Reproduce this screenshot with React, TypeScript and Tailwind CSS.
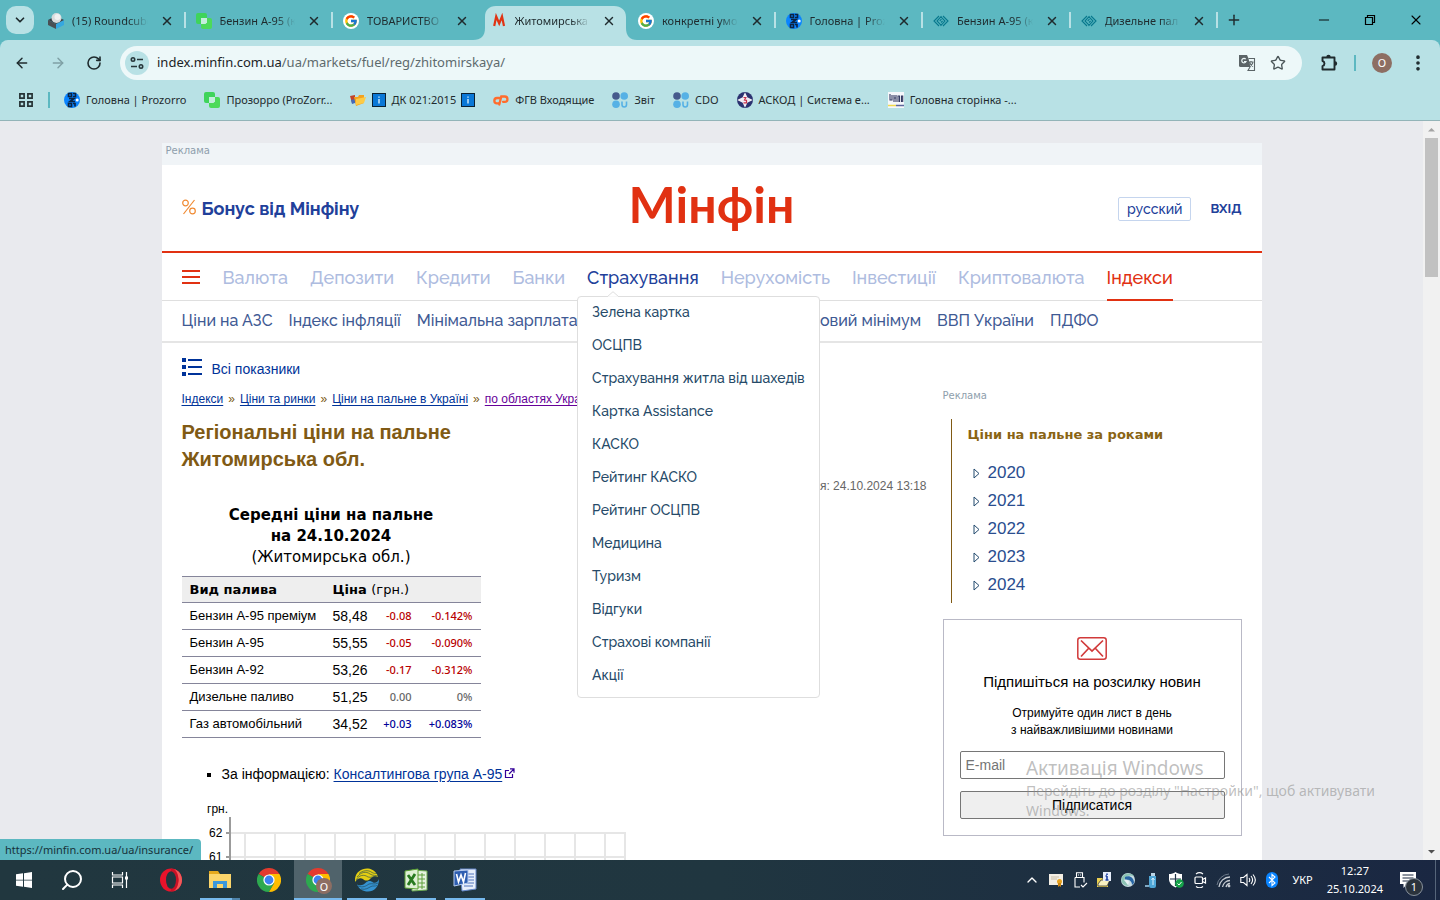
import React from "react";
import {
  ArrowLeft,
  ArrowRight,
  RotateCw,
  X,
  Plus,
  ChevronDown,
  ChevronUp,
  Minus,
  Star,
  EllipsisVertical,
  Search,
} from "lucide-react";
import { FcGoogle } from "react-icons/fc";

type IconProps = { className?: string };

/* ---------- Small site icons ---------- */

const RoundcubeIcon = () => (
  <svg viewBox="0 0 16 16" className="size-4 shrink-0">
    <path d="M0 7l8 4v5L0 12z" fill="#4a4f54" />
    <path d="M16 7l-8 4v5l8-4z" fill="#35a7e0" />
    <path d="M0 7l8-4 8 4-8 4z" fill="#37414a" />
    <circle cx="8.500" cy="5" r="5" fill="#d9dcdd" />
    <circle cx="9.500" cy="4" r="3" fill="#f0f1f1" />
  </svg>
);

const GreenSquares = () => (
  <svg viewBox="0 0 16 16" className="size-4 shrink-0">
    <rect width="11" height="11" rx="2" fill="#3fd45b" />
    <rect x="5" y="5" width="11" height="11" rx="2" fill="#4cda5a" />
    <rect x="4" y="4" width="7" height="7" rx="1" fill="#3fd45b" />
    <path d="M5 5h6v4.500L9.500 11H5z" fill="#c4eedd" />
  </svg>
);

const GoogleIcon = () => (
  <span className="flex size-4 shrink-0 items-center justify-center rounded-full bg-white">
    <FcGoogle className="size-3.5" />
  </span>
);

const MinfinIcon = () => (
  <svg viewBox="0 0 16 16" className="size-4 shrink-0">
    <path d="M3.200 13L5.200 3.500 8.200 10.500 11 3.500 13 13" fill="none" stroke="#e03414" strokeWidth="2.200" />
  </svg>
);

const BlueBadge = () => (
  <svg viewBox="0 0 16 16" className="size-4 shrink-0">
    <circle cx="8" cy="8" r="8" fill="#0a84ff" />
    <path d="M4.500 1.500h3v3h-3zM9 1.500h2.500v3H9M5 6.500h5L6 9.500h5M4.500 11.500h3v3h-3zM9 11.500h2v3" fill="none" stroke="#0b2442" strokeWidth="1.600" />
    <circle cx="13.200" cy="8" r="1.500" fill="#fff" />
  </svg>
);

const DiamondIcon = () => (
  <svg viewBox="0 0 16 16" className="size-4 shrink-0" fill="none" stroke="#08788d" strokeWidth="1.100">
    <path d="M6 3L1 8l5 5M8.500 3.200L4 8l4 4.200M10 13l5-5-5-5M7.500 12.800L12 8 8 3.800M6.700 8L8.500 6.200M8 9.500L9.600 8" />
  </svg>
);

const FolderPhotos = () => (
  <svg viewBox="0 0 16 16" className="size-4 shrink-0">
    <path d="M0 4l5-1v7l-3 1z" fill="#c1442c" />
    <path d="M1 8l4-1v4l-3 1z" fill="#4468b8" />
    <path d="M4 5h4l1-2h5v8l-8 3z" fill="#f4a21d" />
    <path d="M6 7l10-2-2 6-8 2z" fill="#fdcb45" />
  </svg>
);

const InfoSquare = () => (
  <svg viewBox="0 0 14 14" className="size-3.5 shrink-0">
    <rect x=".5" y=".5" width="13" height="13" fill="#0a78d7" stroke="#0b2233" />
    <path d="M7 6v4.500M7 3.500v1.200" stroke="#d8f0ff" strokeWidth="1.400" />
  </svg>
);

const CpanelIcon = () => (
  <svg viewBox="0 0 16 16" className="size-4 shrink-0" fill="none" stroke="#ff6c2c" strokeWidth="2.300" strokeLinecap="round">
    <path d="M6.500 6H4a2.600 2.600 0 000 5.300h1.500M6.300 12.500l2-8h3.500a2.600 2.600 0 010 5.300H10" />
  </svg>
);

const DotsU = () => (
  <svg viewBox="0 0 16 16" className="size-4 shrink-0">
    <circle cx="4" cy="4" r="3.800" fill="#465a8c" />
    <circle cx="12.200" cy="4" r="3.800" fill="#56b1e5" />
    <circle cx="4" cy="12.200" r="3.800" fill="#56b1e5" />
    <path d="M10 9.500v3.300a2.200 2.200 0 004.500 0V9.500" fill="none" stroke="#56b1e5" strokeWidth="1.600" />
  </svg>
);

const AskodIcon = () => (
  <svg viewBox="0 0 16 16" className="size-4 shrink-0">
    <circle cx="8" cy="8" r="8" fill="#2b3270" />
    <path d="M8 1.800l2 4.200 4.200 2-4.200 2-2 4.200L6 10 1.800 8 6 6z" fill="#f1eef5" stroke="#f1eef5" strokeWidth="1.400" />
    <path d="M6.500 5.500h2.300L7.500 8l2 .3v2.500h-3" fill="none" stroke="#c8324c" strokeWidth="1.200" />
  </svg>
);

const NadsIcon = () => (
  <svg viewBox="0 0 16 16" className="size-4 shrink-0">
    <rect width="16" height="16" fill="#f5f7fb" />
    <path d="M2 2v6h2V3M6 10V3M6 6h2M8 3v7M10 10V4h1.500v6M13.500 10V4h1.200v6" fill="none" stroke="#343a63" strokeWidth="1.100" />
    <path d="M0 13.500h8" stroke="#f1d94c" strokeWidth="1.500" />
    <path d="M8 13.500h8" stroke="#5e679b" strokeWidth="1.500" />
  </svg>
);

/* ---------- Browser ---------- */

const tabs = [
  { title: "(15) Roundcube", icon: <RoundcubeIcon /> },
  { title: "Бензин А-95 (к", icon: <GreenSquares /> },
  { title: "ТОВАРИСТВО", icon: <GoogleIcon /> },
  { title: "Житомирська", icon: <MinfinIcon />, active: true },
  { title: "конкретні умо", icon: <GoogleIcon /> },
  { title: "Головна | Proz", icon: <BlueBadge /> },
  { title: "Бензин А-95 (к", icon: <DiamondIcon /> },
  { title: "Дизельне пал", icon: <DiamondIcon /> },
];

const bookmarks = [
  { title: "Головна | Prozorro", icon: <BlueBadge /> },
  { title: "Прозорро (ProZorr...", icon: <GreenSquares /> },
  { title: "ДК 021:2015", icon: <FolderPhotos />, boxed: true },
  { title: "ФГВ Входящие", icon: <CpanelIcon /> },
  { title: "Звіт", icon: <DotsU /> },
  { title: "CDO", icon: <DotsU /> },
  { title: "АСКОД | Система е...", icon: <AskodIcon /> },
  { title: "Головна сторінка -...", icon: <NadsIcon /> },
];

function TabStrip() {
  return (
    <div className="flex h-10 items-center bg-[#5cb8c1]">
      <button aria-label="Пошук вкладок" className="ml-1.5 flex size-7 shrink-0 items-center justify-center rounded-[10px] bg-[#b8e1e5]">
        <ChevronDown className="size-3.5" strokeWidth={3} />
      </button>
      <div role="tablist" className="ml-1 flex h-full max-w-[1180px] min-w-0 flex-1">
        {tabs.map((tab, i) => (
          <div
            key={i}
            role="tab"
            aria-selected={!!tab.active}
            className="relative flex min-w-0 flex-1 items-end"
          >
            {tab.active && (
              <svg viewBox="0 0 164 34" preserveAspectRatio="none" className="absolute -inset-x-2 bottom-0 h-[34px] w-[164px]">
                <path d="M0 34c8 0 12-4 12-12V11C12 4 16 0 23 0h118c7 0 12 4 12 11v11c0 8 4 12 11 12z" fill="#b8e1e5" />
              </svg>
            )}
            <div className="relative flex h-10 w-full items-center gap-2 pt-0.5 pr-3 pl-2.5">
              {tab.icon}
              <span className="min-w-0 flex-1 overflow-hidden whitespace-nowrap [mask-image:linear-gradient(to_right,#000_75%,transparent)]">
                {tab.title}
              </span>
              <button aria-label="Закрити вкладку" className="ml-1 shrink-0">
                <X className="size-3.5" strokeWidth={2.5} />
              </button>
            </div>
            {i !== 2 && i !== 3 && <span className="absolute top-3 right-0 h-4 w-0.5 bg-[#b8e1e5]" />}
          </div>
        ))}
      </div>
      <button aria-label="Нова вкладка" className="ml-2 shrink-0">
        <Plus className="size-4" strokeWidth={2.2} />
      </button>
      <div className="ml-auto flex items-center gap-[30px] pr-4 text-black">
        <button aria-label="Згорнути"><Minus className="size-4" strokeWidth={1.4} /></button>
        <button aria-label="Розгорнути">
          <svg viewBox="0 0 16 16" className="size-4" fill="none" stroke="currentColor" strokeWidth="1.200">
            <path d="M3.500 5.500h7v7h-7zM5.500 5.500v-2h7v7h-2" />
          </svg>
        </button>
        <button aria-label="Закрити"><X className="size-4" strokeWidth={1.6} /></button>
      </div>
    </div>
  );
}

const TuneIcon = () => (
  <svg viewBox="0 0 16 16" className="size-4" fill="none" stroke="#27363a" strokeWidth="1.600">
    <circle cx="4" cy="4.500" r="1.700" />
    <path d="M8 4.500h6M2 11.500h6" />
    <circle cx="12" cy="11.500" r="1.700" />
  </svg>
);

const TranslateIcon = () => (
  <svg viewBox="0 0 18 18" className="size-[18px]">
    <path d="M1 1h8l1.500 3.500L12.500 13H2.500A1.500 1.500 0 011 11.500z" fill="#5b6467" />
    <path d="M7.700 5.200a2.200 2.200 0 10.300 2.300H6" fill="none" stroke="#edf8f9" strokeWidth="1.200" />
    <path d="M10.500 4.500h6v12H10l2-3.500M10.500 8h5M13 7v1.200M11.500 8.500c.8 2 2 3 3.500 4M15 8.500c-.8 2-2 3-3.200 4" fill="none" stroke="#5b6467" strokeWidth="1.100" />
  </svg>
);

const PuzzleIcon = () => (
  <svg viewBox="0 0 18 18" className="size-[18px]">
    <path d="M2.500 3.500h12v12h-12v-3.300a2.700 2.700 0 000-5.200z" fill="none" stroke="#1f2a2d" strokeWidth="1.900" strokeLinejoin="round" />
    <path d="M6.300 3a2.200 2.200 0 014.400 0zM15 7.300a2.200 2.200 0 010 4.400z" fill="#1f2a2d" />
  </svg>
);

function Toolbar() {
  return (
    <div className="bg-[#5cb8c1]">
      <div className="rounded-t-lg border-b border-[#93b4b8] bg-[#b8e1e5]">
        <div className="flex h-[46px] items-center pr-3 pl-3.5">
          <div className="flex items-center gap-5">
            <button aria-label="Назад"><ArrowLeft className="size-4" strokeWidth={2.2} /></button>
            <button aria-label="Вперед" className="text-[#7fa0a5]"><ArrowRight className="size-4" strokeWidth={2.2} /></button>
            <button aria-label="Оновити"><RotateCw className="size-4" strokeWidth={2.4} /></button>
          </div>
          <div className="ml-[18px] flex h-[34px] min-w-0 flex-1 items-center rounded-full bg-[#edf8f9] pr-4 pl-[5px]">
            <span className="flex size-6 items-center justify-center rounded-full bg-[#b8e1e5]"><TuneIcon /></span>
            <span className="ml-2 flex-1 truncate text-[13px] text-[#5d6a6d]">
              <span className="text-[#1b2326]">index.minfin.com.ua</span>/ua/markets/fuel/reg/zhitomirskaya/
            </span>
            <button aria-label="Перекласти"><TranslateIcon /></button>
            <button aria-label="Закладка" className="ml-3.5 text-[#4a5558]"><Star className="size-4" /></button>
          </div>
          <button aria-label="Розширення" className="ml-[18px]"><PuzzleIcon /></button>
          <span className="ml-4 h-4 w-0.5 bg-[#5cb8c1]" />
          <button aria-label="Профіль" className="ml-4 flex size-5 items-center justify-center rounded-full bg-[#8d6e63] text-[11px] text-white">
            О
          </button>
          <button aria-label="Меню" className="ml-4"><EllipsisVertical className="size-5" strokeWidth={2.4} /></button>
        </div>
        <div className="flex h-[34px] items-start pt-1.5 pl-[18px] whitespace-nowrap">
          <svg viewBox="0 0 16 16" className="size-4" fill="none" stroke="#263336" strokeWidth="1.700">
            <path d="M1.900 1.900h4.200v4.200H1.900zM9.900 1.900h4.200v4.200H9.900zM1.900 9.900h4.200v4.200H1.900zM9.900 9.900h4.200v4.200H9.900z" />
          </svg>
          <span className="mx-3.5 h-4 w-0.5 bg-[#5cb8c1]" />
          <div className="flex gap-[18px]">
            {bookmarks.map((b) => (
              <a key={b.title} href="#" className="flex items-center gap-1.5 leading-4">
                {b.icon}
                {b.boxed ? (
                  <span className="flex items-center gap-[5px]"><InfoSquare />{b.title}<InfoSquare /></span>
                ) : (
                  b.title
                )}
              </a>
            ))}
          </div>
        </div>
      </div>
    </div>
  );
}

/* ---------- Site ---------- */

const navItems = ["Валюта", "Депозити", "Кредити", "Банки", "Страхування", "Нерухомість", "Інвестиції", "Криптовалюта", "Індекси"];
const subItems = ["Ціни на АЗС", "Індекс інфляції", "Мінімальна зарплата", "Середня зарплата", "Прожитковий мінімум", "ВВП України", "ПДФО"];
const insurance = [
  "Зелена картка", "ОСЦПВ", "Страхування житла від шахедів", "Картка Assistance", "КАСКО", "Рейтинг КАСКО",
  "Рейтинг ОСЦПВ", "Медицина", "Туризм", "Відгуки", "Страхові компанії", "Акції",
];

function InsuranceMenu() {
  return (
    <ul className="absolute top-[43px] -left-2.5 z-20 rounded border border-[#dedede] bg-white pb-1 text-sm text-[#264a68]">
      <svg viewBox="0 0 12 6" className="absolute -top-[6px] left-[29px] h-1.5 w-3">
        <path d="M0 6L6 .7 12 6z" fill="#fff" stroke="#dedede" />
        <path d="M1 6h10" stroke="#fff" />
      </svg>
      {insurance.map((item) => (
        <li key={item}>
          <a href="#" className="block px-3.5 pb-0.5 leading-[31px] whitespace-nowrap">{item}</a>
        </li>
      ))}
    </ul>
  );
}

function SiteHeader() {
  return (
    <header className="font-['Raleway','Lato','Liberation_Sans',sans-serif] font-medium">
      <div className="grid h-[86px] grid-cols-3 items-center px-5">
        <a href="#" className="flex items-center gap-1.5 pt-0.5 text-lg font-bold text-[#21409a]">
          <svg viewBox="0 0 14 16" className="-mt-1 h-4 w-3.5" fill="none" stroke="#f08a32" strokeWidth="1.200">
            <circle cx="3.500" cy="4" r="2.800" />
            <circle cx="10.500" cy="12" r="2.800" />
            <path d="M12.500 1L1.500 15" />
          </svg>
          Бонус від Мінфіну
        </a>
        <a href="#" className="pb-2 text-center font-['Lato',sans-serif] text-[50px] leading-[60px] font-bold text-[#e13112]">Мінфін</a>
        <div className="flex items-center justify-end gap-[19px] pt-0.5 text-[#21409a]">
          <a href="#" className="rounded-xs border border-[#c5d5ee] px-2 text-sm leading-[22px]">русский</a>
          <a href="#" className="text-[13px] font-bold">ВХІД</a>
        </div>
      </div>
      <nav className="flex h-[50px] items-center border-t-2 border-b border-t-[#e13112] border-b-[#dfdfdf] px-5 text-lg">
        <button aria-label="Меню" className="mr-[23px] flex w-[18px] flex-col gap-1">
          <span className="h-0.5 bg-[#e13112]" />
          <span className="h-0.5 bg-[#e13112]" />
          <span className="h-0.5 bg-[#e13112]" />
        </button>
        <div className="flex h-12 gap-[22px] self-start leading-[50px] whitespace-nowrap">
          {navItems.map((item) => (
            <div key={item} className="relative">
              <a
                href="#"
                className={
                  item === "Індекси"
                    ? "block h-12 border-b-2 border-[#e13112] text-[#e13112]"
                    : item === "Страхування"
                      ? "block text-[#21409a]"
                      : "block text-[#aebcdf]"
                }
              >
                {item}
              </a>
              {item === "Страхування" && <InsuranceMenu />}
            </div>
          ))}
        </div>
      </nav>
      <nav className="flex h-[42px] items-center gap-4 border-b-2 border-[#e5e5e5] px-5 text-base whitespace-nowrap text-[#3f5a94]">
        {subItems.map((item) => <a key={item} href="#">{item}</a>)}
      </nav>
    </header>
  );
}

const rows = [
  { name: "Бензин А-95 преміум", price: "58,48", delta: "-0.08", pct: "-0.142%", tone: "text-[#b80000]" },
  { name: "Бензин А-95", price: "55,55", delta: "-0.05", pct: "-0.090%", tone: "text-[#b80000]" },
  { name: "Бензин А-92", price: "53,26", delta: "-0.17", pct: "-0.312%", tone: "text-[#b80000]" },
  { name: "Дизельне паливо", price: "51,25", delta: "0.00", pct: "0%", tone: "text-[#666666]" },
  { name: "Газ автомобільний", price: "34,52", delta: "+0.03", pct: "+0.083%", tone: "text-[#000099]" },
];

function PriceTable() {
  return (
    <table className="mt-[11px] w-[299px] table-fixed border-collapse">
      <caption className="pb-2 font-['DejaVu_Sans',sans-serif] text-[15px] leading-[21px]">
        <b>Середні ціни на пальне<br />на 24.10.2024</b><br />(Житомирська обл.)
      </caption>
      <colgroup>
        <col className="w-[143px]" />
        <col className="w-[43px]" />
        <col className="w-[52px]" />
        <col className="w-[61px]" />
      </colgroup>
      <thead>
        <tr className="h-[26px] border-y border-[#85859a] bg-[#eeeeee] text-left font-['DejaVu_Sans',sans-serif] text-[13px]">
          <th scope="col" className="pl-2">Вид палива</th>
          <th scope="col" colSpan={3} className="pl-2">Ціна <span className="font-normal">(грн.)</span></th>
        </tr>
      </thead>
      <tbody>
        {rows.map((r) => (
          <tr key={r.name} className="h-[27px] border-b border-[#85859a]">
            <td className="pl-2 text-[13px] whitespace-nowrap">{r.name}</td>
            <td className="pl-2 text-sm">{r.price}</td>
            <td className={"pr-2 text-right font-['Noto_Sans',sans-serif] text-[11px] font-medium " + r.tone}>{r.delta}</td>
            <td className={"pr-2 text-right font-['Noto_Sans',sans-serif] text-[11px] font-medium " + r.tone}>{r.pct}</td>
          </tr>
        ))}
      </tbody>
    </table>
  );
}

const gridX = [17, 47, 77, 107, 137, 167, 197, 227, 257, 287, 317, 347, 377];

function PriceChart() {
  return (
    <svg viewBox="0 0 450 100" className="mt-4 h-[100px] w-[450px] shrink-0 text-xs" fill="#000">
      <text x="25" y="13">грн.</text>
      <text x="27" y="37">62</text>
      <text x="27" y="61">61</text>
      <g transform="translate(46 0)" stroke="#e6e6e6" strokeWidth="2">
        {gridX.map((x) => <path key={x} d={`M${x} 33v67`} />)}
        <path d="M2 33h396M2 57h396M397 33v67" />
      </g>
      <path d="M48 17v83M44 33h4M44 57h4" stroke="#9b9b9b" strokeWidth="2" />
    </svg>
  );
}

function ListIcon({ className }: IconProps) {
  return (
    <svg viewBox="0 0 20 18" className={className} fill="#003399">
      <path d="M0 0h4v4H0zM0 7h4v4H0zM0 14h4v4H0zM6 1h14v2H6zM6 8h14v2H6zM6 15h14v2H6z" />
    </svg>
  );
}

function Main() {
  const link = "text-[#003399] underline underline-offset-2";
  return (
    <main className="min-w-0 flex-1 pl-5">
      <a href="#" className="mt-4 flex items-center gap-2.5 text-sm leading-5 text-[#003399]">
        <ListIcon className="-mt-1 h-[18px] w-5" />
        Всі показники
      </a>
      <div className="mt-3 flex gap-[5px] text-xs leading-4 text-[#7a5a12]">
        <a href="#" className={link}>Індекси</a>»
        <a href="#" className={link}>Ціни та ринки</a>»
        <a href="#" className={link}>Ціни на пальне в Україні</a>»
        <a href="#" className="text-[#660099] underline underline-offset-2">по областях України</a>
      </div>
      <h1 className="mt-3 text-xl leading-[27px] font-bold text-[#805a14]">
        Регіональні ціни на пальне<br />Житомирська обл.
      </h1>
      <p className="mt-[5px] pr-4 text-right text-xs leading-4 text-[#666666]">Останнє оновлення: 24.10.2024 13:18</p>
      <PriceTable />
      <ul className="mt-[26px] ml-10 list-[square] text-sm leading-5">
        <li>
          За інформацією: <a href="#" className={link}>Консалтингова група А-95</a>
          <svg viewBox="0 0 11 11" className="ml-0.5 inline size-[11px] align-baseline" fill="none" stroke="#330099" strokeWidth="1.200">
            <path d="M5 2.500H1.500v7h7V6M6 .8h4v4M10 .8L5 6" />
          </svg>
        </li>
      </ul>
      <PriceChart />
    </main>
  );
}

function Sidebar() {
  return (
    <aside className="mr-5 w-[299px] shrink-0 pt-[45px]">
      <p className="font-['DejaVu_Sans',sans-serif] text-[10px] leading-4 text-[#8e9eac]">Реклама</p>
      <section className="mt-[15px] ml-2 border-l border-[#805a14] pt-1.5 pb-1 pl-4">
        <h2 className="font-['DejaVu_Sans',sans-serif] text-[13px] leading-5 font-bold text-[#8a6414]">Ціни на пальне за роками</h2>
        <ul className="mt-3.5 text-[17px] leading-7 text-[#2a4d8f]">
          {["2020", "2021", "2022", "2023", "2024"].map((y) => (
            <li key={y}>
              <a href="#" className="flex items-center gap-2 pl-[5px]">
                <svg viewBox="0 0 7 11" className="h-[11px] w-[7px]" fill="none" stroke="#234a6e">
                  <path d="M1 1l5 4.500L1 10z" />
                </svg>
                {y}
              </a>
            </li>
          ))}
        </ul>
      </section>
      <form className="mt-4 flex flex-col items-center border border-[#b9b9c6] px-4 pt-[17px] pb-4 text-center" onSubmit={(e) => e.preventDefault()}>
        <svg viewBox="0 0 30 23" className="h-[23px] w-[30px]" fill="none" stroke="#d13a3a">
          <rect x=".8" y=".8" width="28.400" height="21.400" rx="2.500" strokeWidth="1.500" />
          <path d="M4 3.500l11 10.500 11-10.500M4 19.500l7.500-8M26 19.500l-7.500-8" strokeWidth="1.700" />
        </svg>
        <h2 className="mt-3 text-[15px] leading-5">Підпишіться на розсилку новин</h2>
        <p className="mt-[13px] text-xs leading-[17px]">Отримуйте один лист в день<br />з найважливішими новинами</p>
        <input type="email" aria-label="E-mail" placeholder="E-mail" className="mt-3 h-7 w-full rounded-xs border border-[#767676] px-[5px] text-sm placeholder:text-[#757575]" />
        <button className="mt-3 h-7 w-full rounded-xs border border-[#767676] bg-[#efefef] text-sm">Підписатися</button>
      </form>
    </aside>
  );
}

function Scrollbar() {
  return (
    <div className="flex w-[17px] shrink-0 flex-col items-center bg-[#f1f1f1]">
      <svg viewBox="0 0 17 17" className="size-[17px]"><path d="M5 10.500L8.500 7l3.500 3.500z" fill="#a3a3a3" /></svg>
      <div className="h-[139px] w-[13px] bg-[#c1c1c1]" />
      <svg viewBox="0 0 17 17" className="mt-auto size-[17px]"><path d="M5 7l3.500 3.500L12 7z" fill="#505050" /></svg>
    </div>
  );
}

/* ---------- Taskbar ---------- */

const OperaIcon = () => (
  <svg viewBox="0 0 24 24" className="size-6">
    <ellipse cx="12" cy="12" rx="11" ry="11.500" fill="#e8132b" />
    <path d="M15 1c5 1.500 8 6 8 11s-3 9.500-8 11c3-2 4.500-6.500 4.500-11S18 3 15 1z" fill="#f25a5a" />
    <path d="M12 .5c4 0 7 5 7.500 11.500C19 18.500 16 23.500 12 23.500z" fill="#c81226" />
    <ellipse cx="12" cy="12" rx="5" ry="8.700" fill="#21363f" />
  </svg>
);

const ExplorerIcon = () => (
  <svg viewBox="0 0 24 20" className="h-5 w-6">
    <path d="M1 1h9l2 3h11v14H1z" fill="#e5a91d" />
    <path d="M1 4h22v14H1z" fill="#fbd56b" />
    <path d="M5 18v-7h14v7h-4v-4H9v4z" fill="#3c98dc" />
  </svg>
);

const ChromeIcon = () => (
  <svg viewBox="0 0 24 24" className="size-6">
    <path d="M12 12L1.600 6A12 12 0 0122.400 6z" fill="#e33b2e" />
    <path d="M12 12L1.600 6A12 12 0 0012 24l5.200-9z" fill="#2da94f" />
    <path d="M12 12l5.200 3L12 24A12 12 0 0022.400 6H12z" fill="#fdbd00" />
    <circle cx="12" cy="12" r="5.600" fill="#fff" />
    <circle cx="12" cy="12" r="4.400" fill="#3c82f1" />
  </svg>
);

const WaveIcon = () => (
  <svg viewBox="0 0 24 24" className="size-6">
    <path d="M0 14C-1 5 6 0 13 .5c5 .5 9 4 10 8.500-4-2-6 0-8 2s-5 2-7 0c-3-2-6 0-8 3z" fill="#e4cf13" />
    <path d="M24 11c0 8-5 12.500-11 12.500-5 0-9-2.500-11-7 4 2 7 0 9-2s5-2 7 0c3 1 5-1 6-3.500z" fill="#3592d0" />
    <path d="M2 9c4-5 9-6 13-3 3 2 6 1 8 2M4 5.500c4-3 9-4 13-1 2 1 3 1 5 1M1 12c3-5 8-6 12-3 3 1 6-1 9 0M3 18c5 2 8 0 11-2 3-1 6 1 9-1M6 21c5 1 7-1 10-2.500 2-1 4 0 6-1" fill="none" stroke="#1d4352" strokeWidth=".6" />
  </svg>
);

const ExcelIcon = () => (
  <svg viewBox="0 0 24 24" className="size-6">
    <path d="M8 2l15 1v19l-15 1z" fill="#e6f2df" stroke="#6aa84f" />
    <path d="M14 7h7M14 11h7M14 15h7M14 19h7M18 5v16" stroke="#5e9f3b" />
    <path d="M1 3l13-2v20L1 20z" fill="#dff0d4" stroke="#5aa033" />
    <path d="M4 7l7 10M11 6L4 17" stroke="#287a20" strokeWidth="2.800" />
  </svg>
);

const WordIcon = () => (
  <svg viewBox="0 0 24 24" className="size-6">
    <path d="M7 1h16v20l-14 2z" fill="#e8effb" stroke="#6487c9" />
    <path d="M15 6h6M15 9h6M15 12h6M11 15h10M11 18h9" stroke="#5074bd" />
    <path d="M1 3l14-1v13L1 18z" fill="#2e5eb0" stroke="#b6ccf0" />
    <path d="M3.500 6l2 8L8 7l2.500 7 2-9" fill="none" stroke="#fff" strokeWidth="1.600" />
  </svg>
);

const apps = [
  { label: "Opera", icon: <OperaIcon />, line: "" },
  { label: "Провідник", icon: <ExplorerIcon />, line: "absolute inset-x-1 bottom-0 h-0.5 border-r-8 border-[#4f84ab] bg-[#76b9ed]" },
  { label: "Chrome", icon: <ChromeIcon />, line: "" },
  { label: "Chrome О", icon: <ChromeIcon />, line: "absolute inset-x-0 bottom-0 h-0.5 bg-[#76b9ed]", focused: true },
  { label: "Earth", icon: <WaveIcon />, line: "absolute inset-x-1 bottom-0 h-0.5 bg-[#76b9ed]" },
  { label: "Excel", icon: <ExcelIcon />, line: "absolute inset-x-1 bottom-0 h-0.5 bg-[#76b9ed]" },
  { label: "Word", icon: <WordIcon />, line: "absolute inset-x-1 bottom-0 h-0.5 bg-[#76b9ed]" },
];

const trayIcons = [
  <ChevronUp key="up" className="size-4" strokeWidth={2} />,
  <svg key="cert" viewBox="0 0 16 16" className="size-4">
    <path d="M1 2h14v11H1z" fill="#f3eee4" /><path d="M3 5h8M3 7h6" stroke="#c9bda7" /><circle cx="11.500" cy="9.500" r="2.500" fill="#e7a21d" /><path d="M10 11h3v4l-1.500-1L10 15z" fill="#c9820e" />
  </svg>,
  <svg key="usb" viewBox="0 0 16 16" className="size-4" fill="none" stroke="#fff" strokeWidth="1.100">
    <path d="M4.500 5V.8h6V5M3 5.500h9v5M3 5.500V15h5M6.500 2.500v1M8.500 2.500v1M9 13l2 2 4-4" />
  </svg>,
  <svg key="info" viewBox="0 0 16 16" className="size-4">
    <path d="M1 6h5l1 1h5v8H1z" fill="#e9cf52" /><path d="M2 12l3-4h9l-3 6H2z" fill="#f7f0c0" stroke="#222" strokeWidth=".7" /><path d="M7 0h8v9H7z" fill="#e7eefb" /><path d="M11 1.500v1.500M11 4v4M9.500 8h3M9.500 4H11" stroke="#1c3fa0" strokeWidth="1.600" />
  </svg>,
  <svg key="globe" viewBox="0 0 16 16" className="size-4">
    <circle cx="8" cy="8" r="7" fill="#c8dce2" /><path d="M1.500 7C3 1 10 0 14 4c-4-1-7-1-8 2s1 6 3 8c-5 0-8-3-7.500-7z" fill="#8cc3b4" /><path d="M5 5c4-2 9 0 9 6l-2 2c0-4-3-6-7-5z" fill="#2765a4" /><path d="M4 8c2-1 4 0 5 2l-1 3z" fill="#e8f1f3" />
  </svg>,
  <svg key="drive" viewBox="0 0 16 16" className="size-4">
    <path d="M7 1h4v4H7z" fill="#bcd6e6" /><path d="M5 4h7v10a2 2 0 01-2 2H7a2 2 0 01-2-2z" fill="#4fa6d6" /><path d="M9 6v7M7.500 8L9 6l1.500 2" stroke="#d9f0ff" fill="none" /><path d="M1 14h4" stroke="#7fa9c4" strokeWidth="2" />
  </svg>,
  <svg key="shield" viewBox="0 0 16 16" className="size-4">
    <path d="M7.500 0c2 1.500 4 2 6.500 2v5c0 4-3 7-6.500 8.500C4 14 1 11 1 7V2c2.500 0 4.500-.5 6.500-2z" fill="#fff" /><path d="M7.500 2v12M2 7h11" stroke="#1f3347" strokeWidth="1.200" /><circle cx="11.500" cy="11.500" r="4.300" fill="#16a34a" /><path d="M9.500 11.500l1.500 1.500 2.500-3" stroke="#fff" fill="none" />
  </svg>,
  <svg key="cam" viewBox="0 0 16 16" className="size-4" fill="none" stroke="#fff" strokeWidth="1.200">
    <rect x="3" y="5" width="7.500" height="6.500" rx="1" /><path d="M10.500 7.500l3-1.500v5l-3-1.500M4 2c2-1.500 5-1.500 7 0M4 14.500c2 1.500 5 1.500 7 0" />
  </svg>,
  <svg key="wifi" viewBox="0 0 16 16" className="size-4" fill="none" stroke="#c6ccd3">
    <path d="M3 15A11 11 0 0114 5M6.500 15A8 8 0 0114 8.500M10 15a4.500 4.500 0 014-3.500" strokeWidth="1.300" /><path d="M1 13A13 13 0 0113 2" stroke="#6c7989" /><circle cx="13" cy="14" r="1" fill="#fff" />
  </svg>,
  <svg key="sound" viewBox="0 0 16 16" className="size-4" fill="none" stroke="#fff" strokeWidth="1.100">
    <path d="M.8 5.500h2.700L7 2.500v11L3.500 10.500H.8zM9 6c1 1.300 1 2.700 0 4M11 4c2 2.500 2 5.500 0 8M13 2.500c3 3.500 3 7.500 0 11" />
  </svg>,
  <svg key="bt" viewBox="0 0 16 16" className="size-4">
    <rect x="2" y="0" width="12" height="16" rx="6" fill="#0a84ff" /><path d="M5 5l6 6-3 2.500v-11L11 5l-6 6" fill="none" stroke="#fff" strokeWidth="1.100" />
  </svg>,
];

function Taskbar() {
  return (
    <footer className="flex h-10 shrink-0 items-stretch bg-linear-to-r from-[#21373f] via-[#203640] to-[#1a2742] text-white">
      <div className="flex w-[147px]">
        <button aria-label="Пуск" className="flex w-12 items-center justify-center">
          <svg viewBox="0 0 16 16" className="size-4" fill="#fff"><path d="M0 2.300l7-1v6.400H0zM8 1.200L16 0v7.700H8zM0 8.500h7v6.300l-7-1zM8 8.500h8V16l-8-1.200z" /></svg>
        </button>
        <button aria-label="Пошук" className="flex w-12 items-center justify-center"><Search className="size-6 -scale-x-100" strokeWidth={2} /></button>
        <button aria-label="Подання завдань" className="flex w-12 items-center justify-center">
          <svg viewBox="0 0 18 18" className="size-[18px]" fill="none" stroke="#fff" strokeWidth="1.200">
            <path d="M1.500 1v3h10V1M1.500 17v-3h10v3M1.500 6h10v6h-10zM15.500 1v16" /><path d="M14 5.500h3v3h-3z" fill="#fff" stroke="none" />
          </svg>
        </button>
      </div>
      <div className="flex gap-px">
        {apps.map((a) => (
          <button key={a.label} aria-label={a.label} className={a.focused ? "relative flex w-12 items-center justify-center bg-[#50636b]" : "relative flex w-12 items-center justify-center"}>
            {a.icon}
            {a.focused && (
              <span className="absolute top-[18px] left-[22px] flex size-4 items-center justify-center rounded-full bg-[#8d6e63] text-[11px] leading-none">О</span>
            )}
            {a.line && <span className={a.line} />}
          </button>
        ))}
      </div>
      <div className="ml-auto flex items-center gap-2">
        {trayIcons.map((icon) => icon)}
      </div>
      <span className="ml-3 flex items-center">УКР</span>
      <div className="ml-3.5 flex flex-col justify-center text-center leading-[18px]">
        <span>12:27</span>
        <span>25.10.2024</span>
      </div>
      <button aria-label="Сповіщення" className="relative mr-1 ml-4 flex w-[37px] items-center border-r border-[#56657a]">
        <svg viewBox="0 0 18 18" className="size-[18px]"><path d="M1 1h16v12H8l-3.500 4v-4H1z" fill="#fff" /><path d="M3.500 4h11M3.500 7h11M3.500 10h8" stroke="#1b2941" /></svg>
        <span className="absolute top-[18px] left-1.5 flex size-[18px] items-center justify-center rounded-full border border-[#88919b] bg-[#2b333c]">1</span>
      </button>
    </footer>
  );
}

export default function App() {
  return (
    <div className="flex h-screen flex-col overflow-hidden bg-[#e9eaee] font-['Noto_Sans',sans-serif] text-[11px] text-[#1f2b2e]">
      <TabStrip />
      <Toolbar />
      <div className="relative flex min-h-0 flex-1 font-['Liberation_Sans',Arial,sans-serif] text-black">
        <div className="min-w-0 flex-1 overflow-hidden pt-[22px]">
          <div className="mx-auto w-full max-w-[1100px] bg-white">
            <p className="h-[22px] bg-[#f0f4f7] pl-1 font-['DejaVu_Sans',sans-serif] text-[10px] leading-[15px] text-[#8e9eac]">Реклама</p>
            <SiteHeader />
            <div className="flex">
              <Main />
              <Sidebar />
            </div>
          </div>
        </div>
        <Scrollbar />
        <div className="absolute bottom-0 left-0 rounded-tr bg-[#5cb8c1] pr-2 pl-[5px] font-['Noto_Sans',sans-serif] text-[11px] leading-[21px] text-[#17323a]">
          https://minfin.com.ua/ua/insurance/
        </div>
        <div className="pointer-events-none absolute right-[41px] bottom-[39px] z-30 w-[373px] font-['Noto_Sans',sans-serif] text-sm leading-5 text-[#8a8a8a]/55">
          <p className="text-[19px] leading-[26px]">Активація Windows</p>
          <p>Перейдіть до розділу "Настройки", щоб активувати Windows.</p>
        </div>
      </div>
      <Taskbar />
    </div>
  );
}
